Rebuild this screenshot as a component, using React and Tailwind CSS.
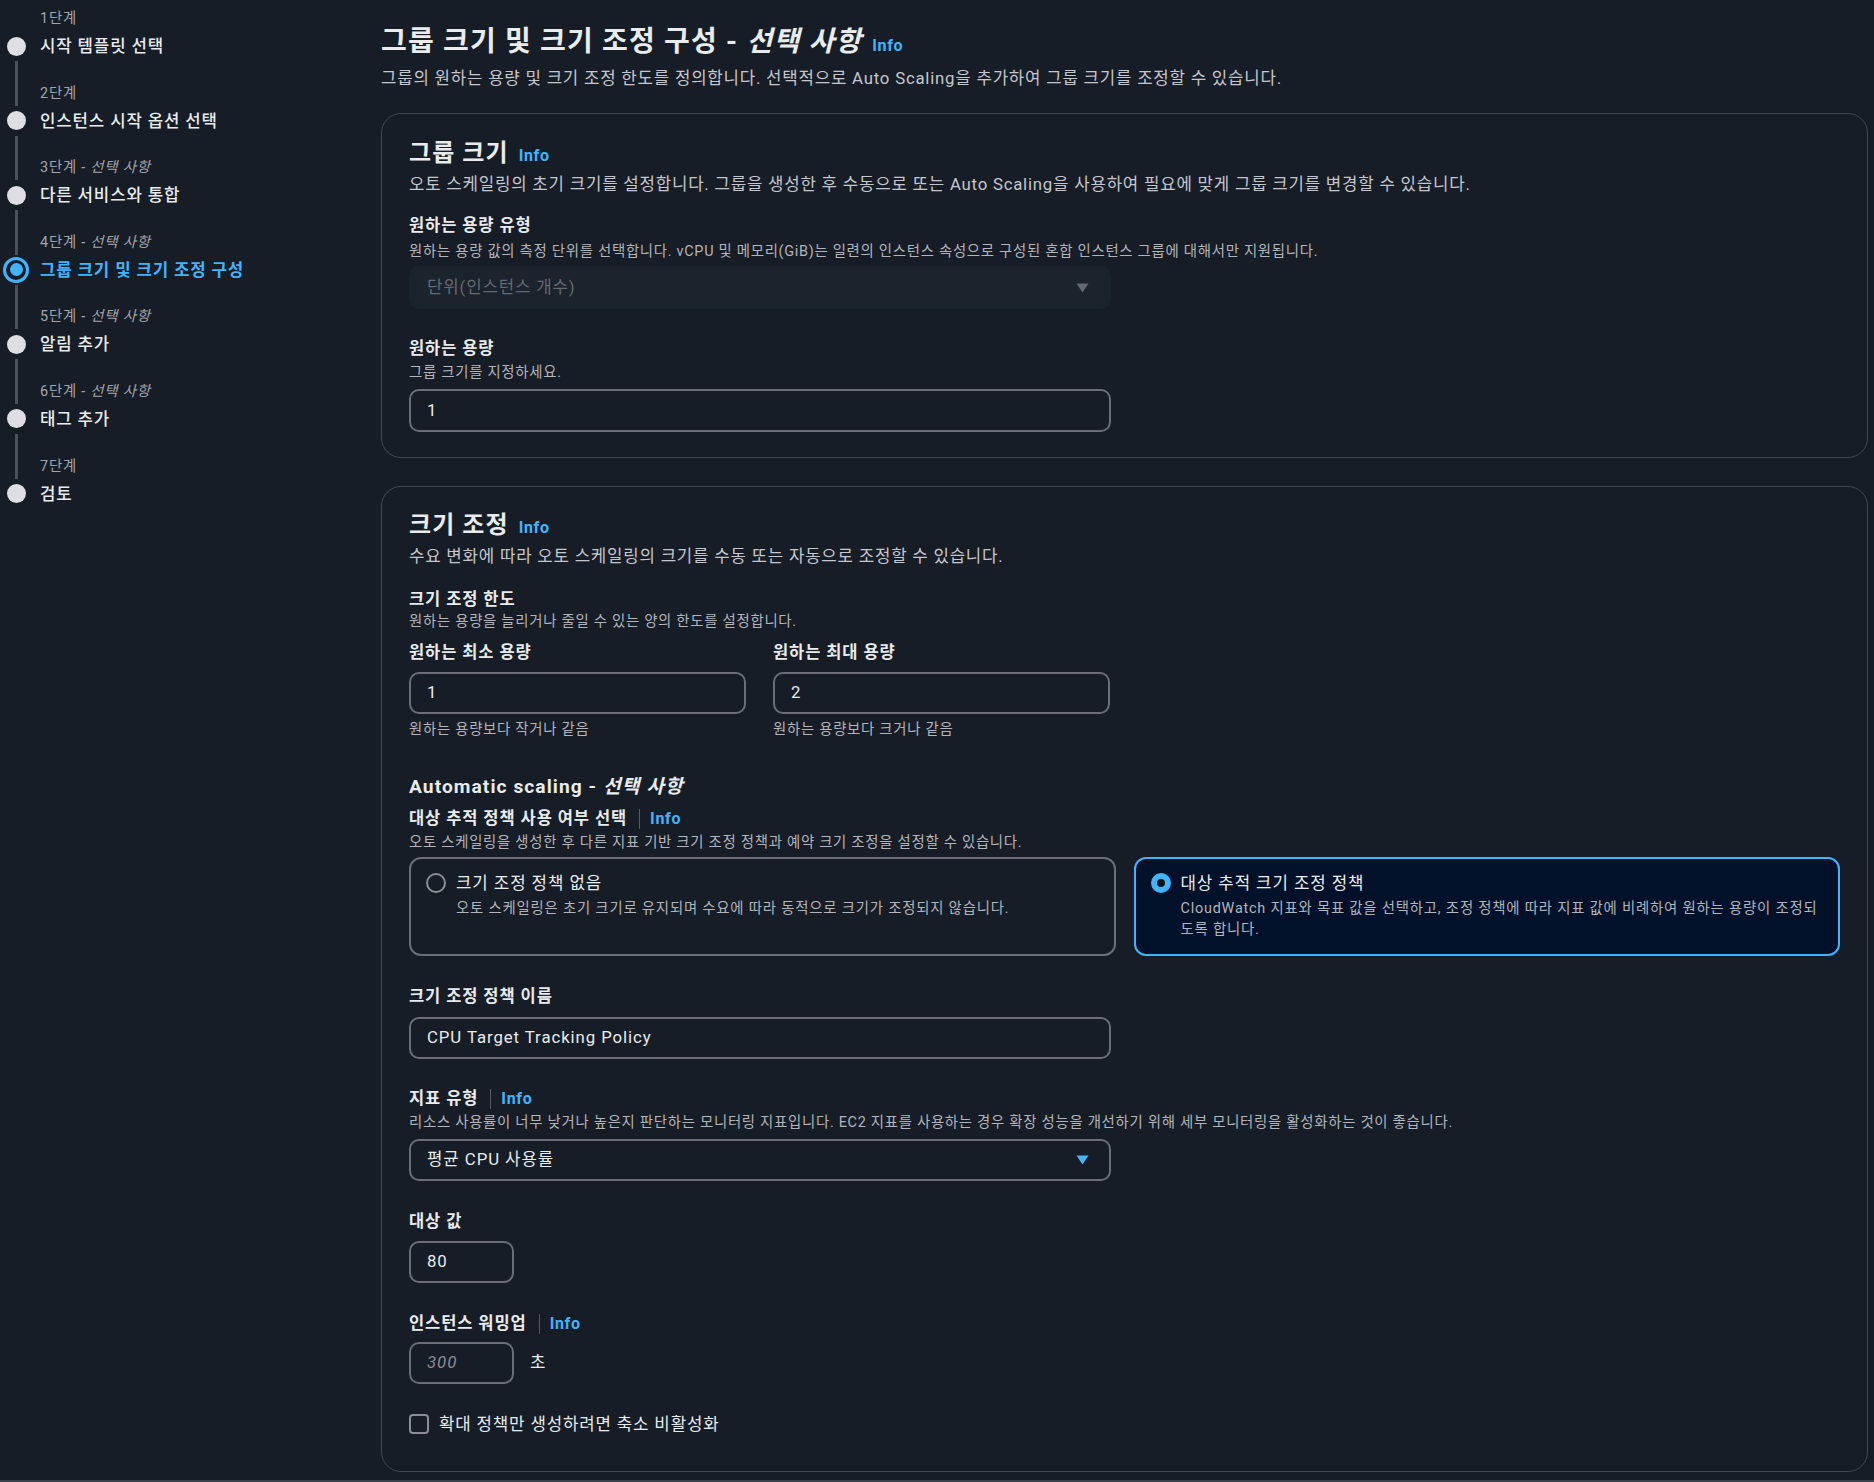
import React from 'react';

const steps = [
  { label: '1단계', title: '시작 템플릿 선택' },
  { label: '2단계', title: '인스턴스 시작 옵션 선택' },
  { label: '3단계', optional: true, title: '다른 서비스와 통합' },
  { label: '4단계', optional: true, title: '그룹 크기 및 크기 조정 구성', active: true },
  { label: '5단계', optional: true, title: '알림 추가' },
  { label: '6단계', optional: true, title: '태그 추가' },
  { label: '7단계', title: '검토' },
];

function Info() {
  return <span className="text-[16px] tracking-[0.04em] font-bold text-[#42b4ff]">Info</span>;
}

function Label({ children, info, className = '' }) {
  return (
    <div className={'flex items-center h-[22px] ' + className}>
      <span className="text-[16.5px] leading-[22px] tracking-[0.055em] font-bold text-[#e9ebed]">{children}</span>
      {info && (
        <>
          <span className="ml-[12px] mr-[10px] h-[20px] w-px bg-[#545b64]" />
          <Info />
        </>
      )}
    </div>
  );
}

function Hint({ children, className = '' }) {
  return <p className={'text-[14.4px] leading-[20px] tracking-[0.05em] text-[#b4b4bb] ' + className}>{children}</p>;
}

function Input({ value, className = 'w-[702px]', placeholder }) {
  return (
    <div className={'h-[42px] rounded-[10px] border-2 border-[#6b6e76] flex items-center pl-[16px] ' + className}>
      {placeholder ? (
        <span className="text-[16.8px] tracking-[0.055em] italic text-[#8c8c94]">{placeholder}</span>
      ) : (
        <span className="text-[16.8px] tracking-[0.055em] text-[#e9ebed]">{value}</span>
      )}
    </div>
  );
}

function Arrow({ color }) {
  return (
    <svg width="13" height="10" viewBox="0 0 13 10">
      <path d="M0.5 0.5 H12.5 L6.5 9.5 Z" fill={color} />
    </svg>
  );
}

function Sidebar() {
  return (
    <div className="w-[381px] shrink-0 pl-[3px] pt-[9px]">
      {steps.map((s, i) => (
        <div key={i} className="flex gap-[11px]">
          <div className="w-[26px] flex flex-col items-center">
            <div className={i === 0 ? 'h-[22px] w-[3px]' : 'h-[22px] w-[3px] bg-[#4b5058]'} />
            <div className="mt-[2px] h-[26px] w-[26px] flex items-center justify-center">
              {s.active ? (
                <div className="h-[26px] w-[26px] rounded-full border-[3px] border-[#42b4ff] flex items-center justify-center">
                  <div className="h-[13px] w-[13px] rounded-full bg-[#42b4ff]" />
                </div>
              ) : (
                <div className="h-[19px] w-[19px] rounded-full bg-[#dedee3]" />
              )}
            </div>
            <div className={i === steps.length - 1 ? 'flex-1 w-[3px] mt-[2px]' : 'flex-1 w-[3px] mt-[2px] bg-[#4b5058]'} />
          </div>
          <div className="pb-[24.6px]">
            <div className="text-[14.4px] leading-[20px] tracking-[0.055em] text-[#a4a4ad]">
              {s.label}
              {s.optional && <span className="italic"> - 선택 사항</span>}
            </div>
            <div
              className={
                s.active
                  ? 'mt-[4px] text-[16.8px] leading-[26px] tracking-[0.05em] font-bold text-[#42b4ff]'
                  : 'mt-[4px] text-[16.8px] leading-[26px] tracking-[0.05em] font-medium text-[#e9ebed]'
              }
            >
              {s.title}
            </div>
          </div>
        </div>
      ))}
    </div>
  );
}

function Tile({ selected, title, desc }) {
  return (
    <div
      className={
        selected
          ? 'h-[99px] rounded-[12px] border-2 border-[#42b4ff] bg-[#001129] pl-[15px] pr-[16px] pt-[13px] flex gap-[10px]'
          : 'h-[99px] rounded-[12px] border-2 border-[#6b6e76] pl-[15px] pr-[16px] pt-[13px] flex gap-[10px]'
      }
    >
      <div className="mt-[1px] shrink-0">
        {selected ? (
          <div className="h-[20px] w-[20px] rounded-full border-[6px] border-[#42b4ff] bg-[#0f141a]" />
        ) : (
          <div className="h-[20px] w-[20px] rounded-full border-2 border-[#8c8c94]" />
        )}
      </div>
      <div>
        <div className="text-[16.8px] leading-[22px] tracking-[0.055em] text-[#e9ebed]">{title}</div>
        <p className="mt-[4px] text-[14.4px] leading-[21px] tracking-[0.055em] text-[#b4b4bb]">{desc}</p>
      </div>
    </div>
  );
}

export default function App() {
  return (
    <div className="h-[1482px] w-[1874px] overflow-hidden bg-[#161d26] font-[family-name:Roboto,'Noto_Sans_CJK_KR',sans-serif] flex flex-col">
      <div className="flex flex-1 min-h-0">
        <Sidebar />
        <main className="flex-1 pr-[6px] pt-[24px]">
          <div className="flex items-baseline gap-[10px]">
            <h1 className="text-[28px] leading-[36px] tracking-[0.042em] font-bold text-[#e9ebed]">
              그룹 크기 및 크기 조정 구성 - <span className="italic">선택 사항</span>
            </h1>
            <Info />
          </div>
          <p className="mt-[6px] text-[16.8px] leading-[24px] tracking-[0.046em] text-[#c6c6cd]">
            그룹의 원하는 용량 및 크기 조정 한도를 정의합니다. 선택적으로 Auto Scaling을 추가하여 그룹 크기를 조정할 수 있습니다.
          </p>

          <section className="mt-[23px] rounded-[20px] border border-[#424650] px-[27px] pt-[23px] pb-[25px]">
            <div className="flex items-baseline gap-[10px]">
              <h2 className="text-[24px] leading-[32px] tracking-[0.045em] font-bold text-[#e9ebed]">그룹 크기</h2>
              <Info />
            </div>
            <p className="mt-[3px] text-[16.8px] leading-[24px] tracking-[0.046em] text-[#c6c6cd]">
              오토 스케일링의 초기 크기를 설정합니다. 그룹을 생성한 후 수동으로 또는 Auto Scaling을 사용하여 필요에 맞게 그룹 크기를 변경할 수 있습니다.
            </p>
            <Label className="mt-[19px]">원하는 용량 유형</Label>
            <Hint className="mt-[5px]">
              원하는 용량 값의 측정 단위를 선택합니다. vCPU 및 메모리(GiB)는 일련의 인스턴스 속성으로 구성된 혼합 인스턴스 그룹에 대해서만 지원됩니다.
            </Hint>
            <div className="mt-[4px] h-[43px] w-[702px] rounded-[10px] bg-[#1b232d] flex items-center justify-between pl-[18px] pr-[22px]">
              <span className="text-[16.8px] tracking-[0.05em] text-[#656871]">단위(인스턴스 개수)</span>
              <Arrow color="#656871" />
            </div>
            <Label className="mt-[29px]">원하는 용량</Label>
            <Hint className="mt-[3px]">그룹 크기를 지정하세요.</Hint>
            <Input value="1" className="mt-[6px] w-[702px] h-[43px]" />
          </section>

          <section className="mt-[28px] rounded-[20px] border border-[#424650] px-[27px] pt-[22px] pb-[35px]">
            <div className="flex items-baseline gap-[10px]">
              <h2 className="text-[24px] leading-[32px] tracking-[0.045em] font-bold text-[#e9ebed]">크기 조정</h2>
              <Info />
            </div>
            <p className="mt-[3px] text-[16.8px] leading-[24px] tracking-[0.046em] text-[#c6c6cd]">
              수요 변화에 따라 오토 스케일링의 크기를 수동 또는 자동으로 조정할 수 있습니다.
            </p>
            <Label className="mt-[21px]">크기 조정 한도</Label>
            <Hint className="mt-[1px]">원하는 용량을 늘리거나 줄일 수 있는 양의 한도를 설정합니다.</Hint>
            <div className="mt-[10px] grid grid-cols-[337px_337px] gap-x-[27px]">
              <div>
                <Label>원하는 최소 용량</Label>
                <Input value="1" className="mt-[8px] w-full" />
                <Hint className="mt-[6px]">원하는 용량보다 작거나 같음</Hint>
              </div>
              <div>
                <Label>원하는 최대 용량</Label>
                <Input value="2" className="mt-[8px] w-full" />
                <Hint className="mt-[6px]">원하는 용량보다 크거나 같음</Hint>
              </div>
            </div>

            <h3 className="mt-[34px] text-[19.2px] leading-[26px] tracking-[0.055em] font-bold text-[#e9ebed]">
              Automatic scaling - <span className="italic">선택 사항</span>
            </h3>
            <Label info className="mt-[8px]">대상 추적 정책 사용 여부 선택</Label>
            <Hint className="mt-[3px]">오토 스케일링을 생성한 후 다른 지표 기반 크기 조정 정책과 예약 크기 조정을 설정할 수 있습니다.</Hint>
            <div className="mt-[4px] grid grid-cols-2 gap-[18px]">
              <Tile
                title="크기 조정 정책 없음"
                desc="오토 스케일링은 초기 크기로 유지되며 수요에 따라 동적으로 크기가 조정되지 않습니다."
              />
              <Tile
                selected
                title="대상 추적 크기 조정 정책"
                desc="CloudWatch 지표와 목표 값을 선택하고, 조정 정책에 따라 지표 값에 비례하여 원하는 용량이 조정되도록 합니다."
              />
            </div>

            <Label className="mt-[30px]">크기 조정 정책 이름</Label>
            <Input value="CPU Target Tracking Policy" className="mt-[9px] w-[702px]" />

            <Label info className="mt-[29px]">지표 유형</Label>
            <Hint className="mt-[3px]">
              리소스 사용률이 너무 낮거나 높은지 판단하는 모니터링 지표입니다. EC2 지표를 사용하는 경우 확장 성능을 개선하기 위해 세부 모니터링을 활성화하는 것이 좋습니다.
            </Hint>
            <div className="mt-[6px] h-[42px] w-[702px] rounded-[10px] border-2 border-[#6b6e76] flex items-center justify-between pl-[16px] pr-[20px]">
              <span className="text-[16.8px] tracking-[0.055em] text-[#e9ebed]">평균 CPU 사용률</span>
              <Arrow color="#42b4ff" />
            </div>

            <Label className="mt-[30px]">대상 값</Label>
            <Input value="80" className="mt-[8px] w-[105px]" />

            <Label info className="mt-[30px]">인스턴스 워밍업</Label>
            <div className="mt-[7px] flex items-center gap-[16px]">
              <Input placeholder="300" className="w-[105px]" />
              <span className="text-[16.8px] text-[#e9ebed]">초</span>
            </div>

            <label className="mt-[28px] flex items-center gap-[10px] h-[24px]">
              <span className="h-[20px] w-[20px] rounded-[4px] border-2 border-[#8c8c94]" />
              <span className="text-[16.8px] leading-[24px] tracking-[0.05em] text-[#e9ebed]">확대 정책만 생성하려면 축소 비활성화</span>
            </label>
          </section>
        </main>
      </div>
      <div className="h-[2px] shrink-0 bg-[#3b414b]" />
    </div>
  );
}
